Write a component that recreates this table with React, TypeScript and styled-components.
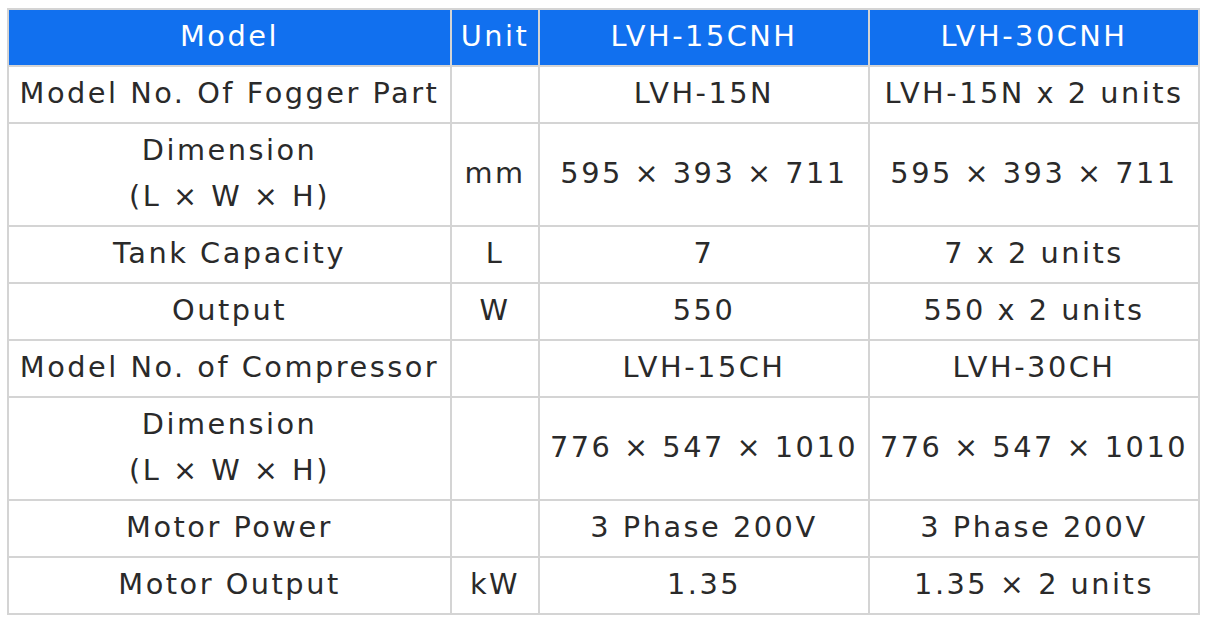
import React from 'react';
import styled, { createGlobalStyle } from 'styled-components';

const GlobalStyle = createGlobalStyle`
  html, body {
    margin: 0;
    padding: 0;
    background: #ffffff;
  }
`;

const Page = styled.div`
  padding: 8px 0 0 7px;
`;

const Table = styled.table`
  width: 1193px;
  table-layout: fixed;
  border-collapse: collapse;
  font-family: 'DejaVu Sans', Verdana, sans-serif;
  font-size: 28.8px;
  letter-spacing: 2.5px;
  line-height: 46px;
  color: #2a2a2a;
`;

const HeadCell = styled.th`
  background-color: #1170ef;
  color: #ffffff;
  font-weight: normal;
  text-align: center;
  padding: 2.5px 0 6.5px;
  border: 2px solid #d4d4d4;
  white-space: nowrap;
`;

const Cell = styled.td`
  text-align: center;
  padding: 2.5px 0 6.5px;
  border: 2px solid #d4d4d4;
  white-space: nowrap;
`;

type Row = { label: React.ReactNode; unit: string; a: string; b: string };

const dimensionLabel = (
  <>
    Dimension
    <br />
    (L × W × H)
  </>
);

const rows: Row[] = [
  { label: 'Model No. Of Fogger Part', unit: '', a: 'LVH-15N', b: 'LVH-15N x 2 units' },
  { label: dimensionLabel, unit: 'mm', a: '595 × 393 × 711', b: '595 × 393 × 711' },
  { label: 'Tank Capacity', unit: 'L', a: '7', b: '7 x 2 units' },
  { label: 'Output', unit: 'W', a: '550', b: '550 x 2 units' },
  { label: 'Model No. of Compressor', unit: '', a: 'LVH-15CH', b: 'LVH-30CH' },
  { label: dimensionLabel, unit: '', a: '776 × 547 × 1010', b: '776 × 547 × 1010' },
  { label: 'Motor Power', unit: '', a: '3 Phase 200V', b: '3 Phase 200V' },
  { label: 'Motor Output', unit: 'kW', a: '1.35', b: '1.35 × 2 units' },
];

const App: React.FC = () => (
  <Page>
    <GlobalStyle />
    <Table>
      <colgroup>
        <col style={{ width: 443 }} />
        <col style={{ width: 88 }} />
        <col style={{ width: 330 }} />
        <col style={{ width: 330 }} />
      </colgroup>
      <thead>
        <tr>
          <HeadCell>Model</HeadCell>
          <HeadCell>Unit</HeadCell>
          <HeadCell>LVH-15CNH</HeadCell>
          <HeadCell>LVH-30CNH</HeadCell>
        </tr>
      </thead>
      <tbody>
        {rows.map((row, i) => (
          <tr key={i}>
            <Cell>{row.label}</Cell>
            <Cell>{row.unit}</Cell>
            <Cell>{row.a}</Cell>
            <Cell>{row.b}</Cell>
          </tr>
        ))}
      </tbody>
    </Table>
  </Page>
);

export default App;
